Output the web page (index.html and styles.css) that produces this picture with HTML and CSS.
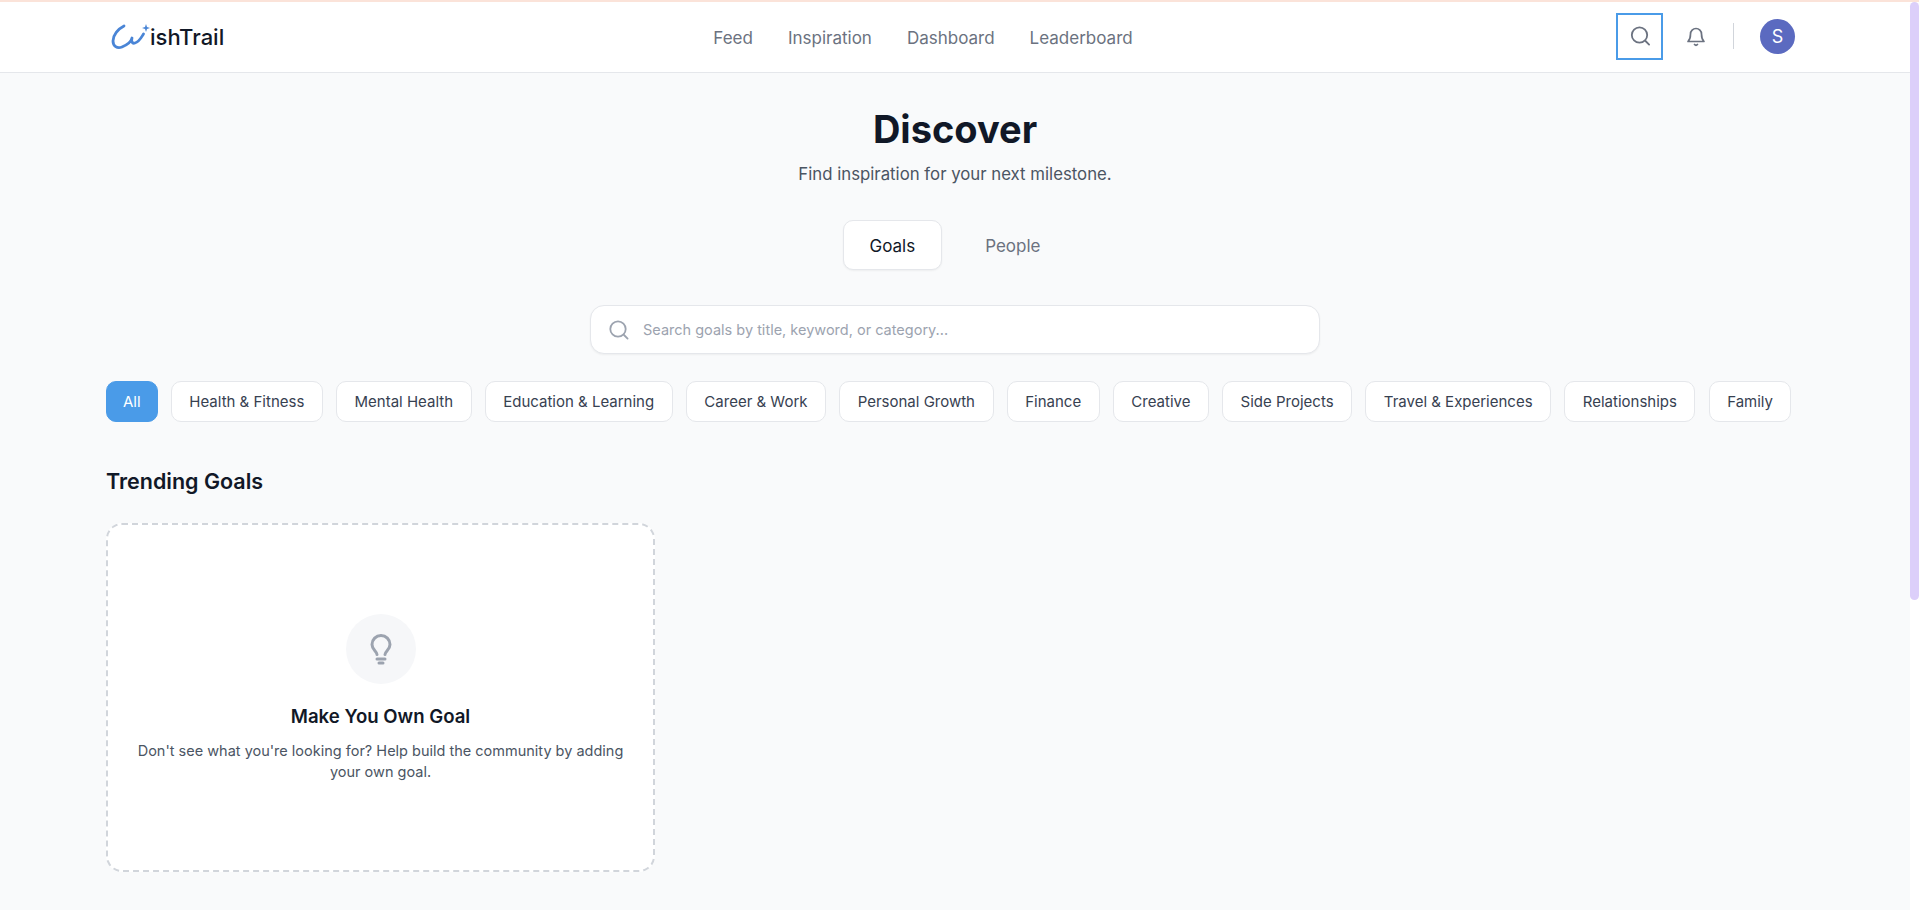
FILE: index.html
```html
<!DOCTYPE html>
<html lang="en">
<head>
  <meta charset="UTF-8">
  <title>WishTrail - Discover</title>
  <link rel="stylesheet" href="styles.css">
</head>
<body>
  <div class="app">
    <div class="page">
      <header class="header">
        <a class="logo" href="#">
          <svg class="logo-mark" viewBox="0 0 45 38" width="45" height="38" fill="none">
            <path d="M19 8C13 11 8 17 8 23c0 5 4 8 9 6 5-2 9-5 10-9-1 3 0 6 3 5 4-1 6-5 8.500-9" stroke="#4a85d6" stroke-width="2.800" stroke-linecap="round" stroke-linejoin="round"/>
            <path d="M41 6l1 3 3 1-3 1-1 3-1-3-3-1 3-1z" fill="#4a85d6"/>
          </svg>
          <span class="logo-text">ishTrail</span>
        </a>
        <nav class="nav">
          <a href="#">Feed</a>
          <a href="#">Inspiration</a>
          <a href="#">Dashboard</a>
          <a href="#">Leaderboard</a>
        </nav>
        <div class="actions">
          <button class="icon-btn search-btn">
            <svg viewBox="0 0 24 24" width="24" height="24" fill="none" stroke="currentColor" stroke-width="1.800" stroke-linecap="round">
              <circle cx="11.500" cy="11" r="7.700"/>
              <path d="M17.500 17l3.600 3.600"/>
            </svg>
          </button>
          <button class="icon-btn bell-btn">
            <svg viewBox="0 0 24 24" width="24" height="24" fill="none" stroke="currentColor" stroke-width="1.700" stroke-linecap="round" stroke-linejoin="round">
              <path d="M6.500 10a5.500 5.500 0 0 1 11 0c0 5 1.500 6.500 2.500 7.500H4c1-1 2.500-2.500 2.500-7.500z"/>
              <path d="M10.500 20.500c.8.8 2.200.8 3 0"/>
            </svg>
          </button>
          <span class="divider"></span>
          <span class="avatar">S</span>
        </div>
      </header>

      <main class="main">
        <h1 class="title">Discover</h1>
        <p class="subtitle">Find inspiration for your next milestone.</p>

        <div class="tabs">
          <button class="tab active">Goals</button>
          <button class="tab">People</button>
        </div>

        <div class="search-box">
          <svg viewBox="0 0 24 24" width="24" height="24" fill="none" stroke="#9ca3af" stroke-width="1.800" stroke-linecap="round">
            <circle cx="11" cy="11" r="7.700"/>
            <path d="M17 17l3.600 3.600"/>
          </svg>
          <input type="text" placeholder="Search goals by title, keyword, or category...">
        </div>

        <div class="chips">
          <button class="chip active">All</button>
          <button class="chip">Health &amp; Fitness</button>
          <button class="chip">Mental Health</button>
          <button class="chip">Education &amp; Learning</button>
          <button class="chip">Career &amp; Work</button>
          <button class="chip">Personal Growth</button>
          <button class="chip">Finance</button>
          <button class="chip">Creative</button>
          <button class="chip">Side Projects</button>
          <button class="chip">Travel &amp; Experiences</button>
          <button class="chip">Relationships</button>
          <button class="chip">Family</button>
        </div>

        <h2 class="section-title">Trending Goals</h2>

        <div class="goal-grid">
          <div class="own-goal">
            <div class="own-icon">
              <svg viewBox="0 0 24 32" width="24" height="32" fill="none" stroke="#9ca3af" stroke-width="3" stroke-linecap="round">
                <path d="M8 21.500c0-3-5-4.500-5-10a9 9 0 0 1 18 0c0 5.500-5 7-5 10"/>
                <path d="M8 26h8"/>
                <path d="M10 30h4"/>
              </svg>
            </div>
            <h3>Make You Own Goal</h3>
            <p>Don't see what you're looking for? Help build the community by adding your own goal.</p>
          </div>
        </div>
      </main>
    </div>
    <div class="scrollbar"><div class="thumb"></div></div>
  </div>
</body>
</html>
```
FILE: styles.css
```css
* {
  box-sizing: border-box;
}

body {
  margin: 0;
  font-family: Inter, "Noto Sans", sans-serif;
  background: #fff;
  color: #111827;
}

button {
  font-family: inherit;
}

.app {
  display: flex;
  height: 910px;
  overflow: hidden;
  border-top: 2px solid #fbe3d9;
}

.page {
  flex: 1;
  min-width: 0;
  background: #f9fafb;
}

.scrollbar {
  width: 9px;
  background: #fff;
}

.thumb {
  height: 598px;
  background: #dccffa;
  border-radius: 5px;
}

/* header */
.header {
  display: flex;
  align-items: center;
  justify-content: space-between;
  height: 71px;
  padding: 0 115px 2px 105px;
  background: #fff;
  border-bottom: 1px solid #e5e7eb;
}

.logo {
  display: flex;
  align-items: center;
  width: 125px;
  margin-top: 2px;
  color: #111827;
  text-decoration: none;
}

.logo-text {
  font-size: 22px;
  font-weight: 500;
}

.nav {
  display: flex;
  gap: 35px;
  margin-top: 3px;
}

.nav a {
  font-size: 17px;
  font-weight: 400;
  color: #6b7280;
  text-decoration: none;
}

.actions {
  display: flex;
  align-items: center;
}

.icon-btn {
  display: flex;
  align-items: center;
  justify-content: center;
  padding: 0;
  background: none;
  border: none;
  color: #6b7280;
}

.search-btn {
  width: 47px;
  height: 47px;
  border: 2px solid #4a9be8;
}

.bell-btn {
  margin-left: 21px;
}

.divider {
  width: 1px;
  height: 26px;
  margin: 0 26px 0 25px;
  background: #d1d5db;
}

.avatar {
  display: flex;
  align-items: center;
  justify-content: center;
  width: 35px;
  height: 35px;
  border-radius: 50%;
  background: #5b6ac0;
  color: #fff;
  font-size: 18px;
}

/* main */
.main {
  padding: 32px 106px 0;
}

.title {
  margin: 0;
  font-size: 38px;
  line-height: 48px;
  font-weight: 700;
  text-align: center;
  color: #111827;
}

.subtitle {
  margin: 8px 0 0;
  font-size: 16.800px;
  line-height: 27px;
  text-align: center;
  color: #4b5563;
}

.tabs {
  display: flex;
  justify-content: center;
  gap: 16px;
  margin-top: 32px;
}

.tab {
  height: 50px;
  padding: 2px 26px 0;
  background: none;
  border: 1px solid transparent;
  border-radius: 10px;
  font-size: 17px;
  font-weight: 400;
  color: #6b7280;
}

.tab.active {
  background: #fff;
  border-color: #e5e7eb;
  color: #111827;
  box-shadow: 0 1px 2px rgba(0, 0, 0, 0.05);
}

.search-box {
  display: flex;
  align-items: center;
  gap: 10px;
  width: 730px;
  height: 49px;
  margin: 35px auto 0;
  padding: 0 16px;
  background: #fff;
  border: 1px solid #e5e7eb;
  border-radius: 14px;
  box-shadow: 0 1px 2px rgba(0, 0, 0, 0.05);
}

.search-box input {
  flex: 1;
  border: none;
  outline: none;
  background: none;
  font-family: inherit;
  font-size: 14.500px;
}

.search-box input::placeholder {
  color: #9ca3af;
}

.chips {
  display: flex;
  gap: 13.200px;
  margin-top: 27px;
}

.chip {
  height: 41px;
  padding: 0 17.500px;
  background: #fff;
  border: 1px solid #e5e7eb;
  border-radius: 10px;
  font-size: 15px;
  font-weight: 400;
  color: #374151;
  white-space: nowrap;
}

.chip.active {
  padding: 0 16px;
  background: #4a9be8;
  border-color: #4a9be8;
  color: #fff;
}

.section-title {
  margin: 44px 0 0;
  font-size: 21.500px;
  line-height: 30px;
  font-weight: 600;
  color: #111827;
}

.goal-grid {
  display: grid;
  grid-template-columns: 549px;
  margin-top: 27px;
}

.own-goal {
  display: flex;
  flex-direction: column;
  align-items: center;
  justify-content: center;
  height: 349px;
  padding: 0 24px;
  background: #fff;
  border: 2px dashed #d1d5db;
  border-radius: 16px;
  text-align: center;
}

.own-icon {
  display: flex;
  align-items: center;
  justify-content: center;
  width: 70px;
  height: 70px;
  border-radius: 50%;
  background: #f6f7f9;
}

.own-goal h3 {
  margin: 18px 0 0;
  font-size: 18.600px;
  line-height: 28px;
  font-weight: 600;
  color: #111827;
}

.own-goal p {
  margin: 10px 0 0;
  font-size: 14.500px;
  line-height: 21px;
  color: #4b5563;
}
```
